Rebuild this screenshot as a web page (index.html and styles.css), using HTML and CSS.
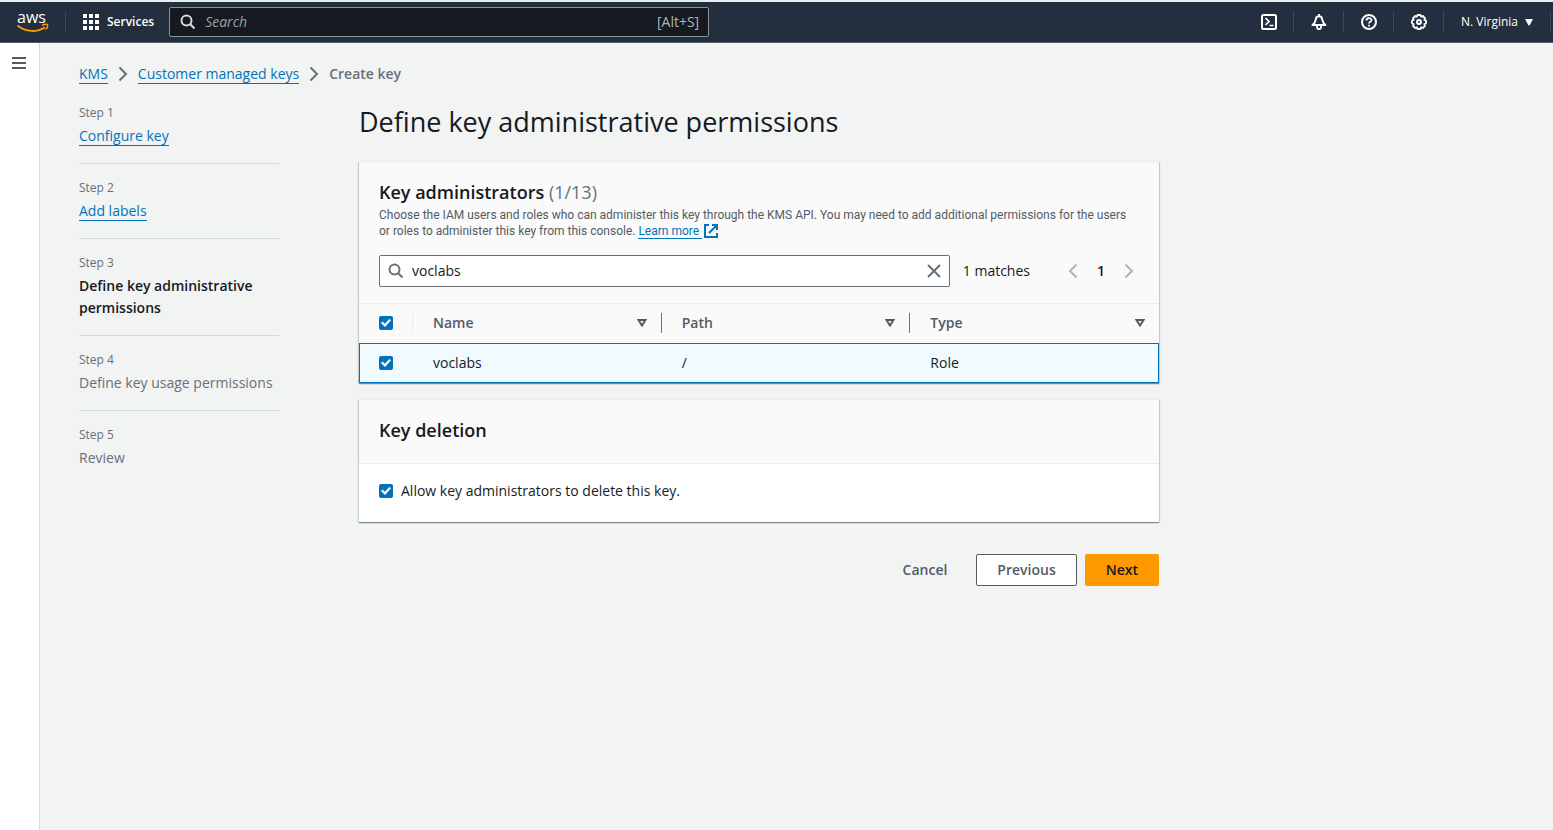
FILE: index.html
```html
<!DOCTYPE html>
<html lang="en">
<head>
<meta charset="utf-8">
<title>Define key administrative permissions</title>
<meta name="viewport" content="width=device-width, initial-scale=1">
<link rel="stylesheet" href="styles.css">
</head>
<body>
<header class="topbar">
  <a class="logo" href="#" aria-label="AWS home">
    <svg width="32" height="36" viewBox="0 -6 32 36">
      <text class="logo-text" x="0" y="13">aws</text>
      <path d="M0.500 15.500C9 22.500 20 22.500 28 17.200" fill="none" stroke="#ff9900" stroke-width="1.800"/>
      <path d="M25 15.200C27.500 14.200 30 14.200 30.500 14.800C31 15.600 30 18 28.600 19.600" fill="none" stroke="#ff9900" stroke-width="1.500"/>
    </svg>
  </a>
  <button class="services" type="button">
    <svg width="16" height="16" viewBox="0 0 16 16" fill="currentColor"><path d="M0 0h4v4H0zM6 0h4v4H6zM12 0h4v4h-4zM0 6h4v4H0zM6 6h4v4H6zM12 6h4v4h-4zM0 12h4v4H0zM6 12h4v4H6zM12 12h4v4h-4z"/></svg>
    <span>Services</span>
  </button>
  <label class="global-search">
    <svg width="16" height="16" viewBox="0 0 16 16" fill="none" stroke="currentColor" stroke-width="2"><circle cx="6.500" cy="6.500" r="5"/><path d="M10 10l4.500 4.500"/></svg>
    <input type="search" placeholder="Search" aria-label="Search">
    <span>[Alt+S]</span>
  </label>
  <nav class="tools" aria-label="Tools">
    <button type="button" aria-label="CloudShell"><svg width="16" height="16" viewBox="0 0 16 16" fill="none" stroke="currentColor" stroke-width="2"><rect x="1" y="1" width="14" height="14" rx="1.500"/><path d="M4.500 4L8 7.500l-3.500 3.500M8.500 11.500h4" stroke-width="1.700"/></svg></button>
    <button type="button" aria-label="Notifications"><svg width="16" height="16" viewBox="0 0 16 16" fill="none" stroke="currentColor" stroke-width="2"><path d="M8 0v2M1.500 11C3.500 9.500 4.500 8 4.800 5.500C5 3.400 6.200 2.200 8 2.200s3 1.200 3.200 3.300C11.500 8 12.500 9.500 14.500 11z" stroke-linejoin="round"/><path d="M6 11.500v2a1.500 1.500 0 0 0 1.500 1.500h1a1.500 1.500 0 0 0 1.500-1.500v-2" stroke-width="1.800"/></svg></button>
    <button type="button" aria-label="Help"><svg width="16" height="16" viewBox="0 0 16 16" fill="none" stroke="currentColor" stroke-width="2"><circle cx="8" cy="8" r="7"/><path d="M5.500 6.500C5.500 3.300 10.500 3.400 10.500 6.200C10.500 7.900 8 7.800 8 9.600M8 10.700v1.800" stroke-width="1.800"/></svg></button>
    <button type="button" aria-label="Settings"><svg width="16" height="16" viewBox="0 0 16 16" fill="none" stroke="currentColor" stroke-width="2"><path d="M6.500 1h3l.6 1.700 1.700-.7 2.200 2.200-.7 1.700 1.700.6v3l-1.700.6.7 1.700-2.200 2.200-1.700-.7-.6 1.700h-3l-.6-1.700-1.700.7L2 11.800l.7-1.700L1 9.500v-3l1.700-.6L2 4.200 4.200 2l1.700.7z" stroke-width="1.800" stroke-linejoin="round"/><circle cx="8" cy="8" r="2"/></svg></button>
    <button class="region" type="button"><span>N. Virginia</span><svg width="8" height="8" viewBox="0 0 8 8" fill="currentColor"><path d="M0 1h8L4.500 7.500h-1z"/></svg></button>
  </nav>
</header>
<div class="shell">
  <aside class="rail">
    <button type="button" aria-label="Open navigation"><svg width="14" height="12" viewBox="0 0 14 12" stroke="currentColor" stroke-width="2"><path d="M0 1h14M0 6h14M0 11h14"/></svg></button>
  </aside>
  <div class="page">
    <nav class="breadcrumbs" aria-label="Breadcrumbs">
      <a class="link" href="#">KMS</a>
      <svg width="10" height="16" viewBox="0 0 10 16" fill="none" stroke="currentColor" stroke-width="2"><path d="M1.500 1.500L8 8l-6.500 6.500"/></svg>
      <a class="link" href="#">Customer managed keys</a>
      <svg width="10" height="16" viewBox="0 0 10 16" fill="none" stroke="currentColor" stroke-width="2"><path d="M1.500 1.500L8 8l-6.500 6.500"/></svg>
      <span class="current">Create key</span>
    </nav>
    <div class="wizard">
      <ol class="steps">
        <li><small>Step 1</small><div><a class="link" href="#">Configure key</a></div></li>
        <li><small>Step 2</small><div><a class="link" href="#">Add labels</a></div></li>
        <li class="active" aria-current="step"><small>Step 3</small><div>Define key administrative permissions</div></li>
        <li><small>Step 4</small><div>Define key usage permissions</div></li>
        <li><small>Step 5</small><div>Review</div></li>
      </ol>
      <main class="content">
        <h1>Define key administrative permissions</h1>
        <section class="card">
          <div class="card-head">
            <h2>Key administrators <span class="count">(1/13)</span></h2>
            <p>Choose the IAM users and roles who can administer this key through the KMS API. You may need to add additional permissions for the users <br>or roles to administer this key from this console. <a class="link" href="#">Learn more&nbsp;</a><svg class="ext-icon" width="14" height="14" viewBox="0 0 14 14" fill="none" stroke="currentColor" stroke-width="2"><path d="M5 1H1v12h12V9M8 1h5v5M13 1L5 9"/></svg></p>
            <div class="filter">
              <div class="filter-box">
                <svg width="16" height="16" viewBox="0 0 16 16" fill="none" stroke="currentColor" stroke-width="2"><circle cx="6.500" cy="6.500" r="5"/><path d="M10 10l4.500 4.500"/></svg>
                <input type="text" value="voclabs" aria-label="Find key administrators">
                <button type="button" aria-label="Clear"><svg width="14" height="14" viewBox="0 0 14 14" fill="none" stroke="currentColor" stroke-width="2"><path d="M1 1l12 12M13 1L1 13"/></svg></button>
              </div>
              <span class="matches">1 matches</span>
              <div class="pager">
                <button type="button" aria-label="Previous page" disabled><svg width="10" height="16" viewBox="0 0 10 16" fill="none" stroke="currentColor" stroke-width="2"><path d="M8.500 1.500L2 8l6.500 6.500"/></svg></button>
                <button class="page-number" type="button">1</button>
                <button type="button" aria-label="Next page" disabled><svg width="10" height="16" viewBox="0 0 10 16" fill="none" stroke="currentColor" stroke-width="2"><path d="M1.500 1.500L8 8l-6.500 6.500"/></svg></button>
              </div>
            </div>
          </div>
          <table class="grid">
            <thead>
              <tr>
                <th class="pick"><div class="cell"><input type="checkbox" checked aria-label="Select all"></div></th>
                <th><div class="cell">Name<svg width="10" height="8" viewBox="0 0 10 8" fill="none" stroke="currentColor" stroke-width="2"><path d="M1.500 1h7L5 6.500z"/></svg></div></th>
                <th><div class="cell">Path<svg width="10" height="8" viewBox="0 0 10 8" fill="none" stroke="currentColor" stroke-width="2"><path d="M1.500 1h7L5 6.500z"/></svg></div></th>
                <th><div class="cell">Type<svg width="10" height="8" viewBox="0 0 10 8" fill="none" stroke="currentColor" stroke-width="2"><path d="M1.500 1h7L5 6.500z"/></svg></div></th>
              </tr>
            </thead>
            <tbody>
              <tr>
                <td class="pick"><div class="cell"><input type="checkbox" checked aria-label="Select voclabs"></div></td>
                <td><div class="cell">voclabs</div></td>
                <td><div class="cell">/</div></td>
                <td><div class="cell">Role</div></td>
              </tr>
            </tbody>
          </table>
        </section>
        <section class="card">
          <div class="card-head deletion-head"><h2>Key deletion</h2></div>
          <div class="card-body"><label class="check"><input type="checkbox" checked>Allow key administrators to delete this key.</label></div>
        </section>
        <div class="actions">
          <button class="btn btn-link" type="button">Cancel</button>
          <button class="btn btn-normal" type="button">Previous</button>
          <button class="btn btn-primary" type="button">Next</button>
        </div>
      </main>
    </div>
  </div>
</div>
</body>
</html>
```
FILE: styles.css
```css
* { box-sizing: border-box; }

body {
  margin: 0;
  min-height: 100vh;
  display: flex;
  flex-direction: column;
  background: #f2f3f3;
  color: #16191f;
  font: 14px/22px "Open Sans", "Noto Sans", sans-serif;
}

button, input { font: inherit; color: inherit; }
button { padding: 0; border: 0; background: none; cursor: pointer; }
svg { display: block; flex: none; }
h1, h2, p, ol { margin: 0; padding: 0; }

.link {
  color: #0073bb;
  text-decoration: none;
  border-bottom: 1px solid #0073bb;
}

/* Top bar */
.topbar {
  display: flex;
  align-items: center;
  height: 43px;
  border-top: 2px solid #eaeded;
  border-bottom: 1px solid #545b64;
  background: #232f3e;
  color: #fff;
  font-size: 12px;
}
.logo {
  display: flex;
  align-items: center;
  height: 22px;
  padding: 0 16px 0 17px;
  border-right: 1px solid #3c4753;
}
.logo-text { font: 500 16px "Open Sans", sans-serif; fill: #fff; }
.services {
  display: flex;
  align-items: center;
  gap: 8px;
  padding: 0 15px 0 17px;
  font-weight: 600;
}
.global-search {
  display: flex;
  align-items: center;
  gap: 9px;
  width: 540px;
  height: 30px;
  padding: 0 9px 0 10px;
  border: 1px solid #879596;
  border-radius: 2px;
  background: #16191f;
  color: #d5dbdb;
  font-size: 14px;
}
.global-search input {
  flex: 1;
  min-width: 0;
  padding: 0;
  border: 0;
  outline: 0;
  background: transparent;
}
.global-search input::placeholder { color: #95a5a6; font-style: italic; opacity: 1; }
.global-search span { color: #aab7b8; }
.tools { display: flex; align-items: center; margin-left: auto; padding-right: 2px; }
.tools button {
  display: flex;
  align-items: center;
  justify-content: center;
  gap: 7px;
  width: 50px;
  height: 22px;
  border-right: 1px solid #3c4753;
}
.tools .region { width: 107px; font-weight: 500; }

/* Page frame */
.shell { display: flex; flex: 1; }
.rail {
  width: 40px;
  padding: 14px 12px;
  border-right: 1px solid #d5dbdb;
  background: #fff;
  color: #545b64;
}
.rail button { display: block; }
.page { flex: 1; min-width: 0; padding: 20px 40px 40px 39px; }
.breadcrumbs { display: flex; align-items: center; gap: 10px; color: #687078; }
.breadcrumbs .link { line-height: 18px; }
.current { font-weight: 600; }
.wizard {
  display: grid;
  grid-template-columns: 200px minmax(0, 800px);
  gap: 80px;
}

/* Step list */
.steps { padding-top: 20px; list-style: none; color: #687078; }
.steps li { padding-bottom: 16px; }
.steps li + li { padding-top: 16px; border-top: 1px solid #d5dbdb; }
.steps small { display: block; margin-bottom: 4px; font-size: 12px; line-height: 16px; }
.steps .link { display: inline-block; line-height: 18px; }
.steps .active div { color: #16191f; font-weight: 600; }

/* Content */
.content { padding-top: 19px; }
h1 { font-size: 27px; font-weight: 400; line-height: 36px; }
h2 { font-size: 18px; font-weight: 600; line-height: 22px; }
.count { color: #687078; font-weight: 400; }
.card {
  background: #fff;
  border-top: 1px solid #eaeded;
  box-shadow: 0 1px 1px 0 rgba(0, 28, 36, .3), 1px 1px 1px 0 rgba(0, 28, 36, .15), -1px 1px 1px 0 rgba(0, 28, 36, .15);
}
h1 + .card { margin-top: 21px; }
.card + .card { margin-top: 16px; }
.card-head { padding: 19px 20px 16px; background: #fafafa; border-bottom: 1px solid #eaeded; }
.card-head p { margin-top: 4px; color: #545b64; font-family: Roboto, "Open Sans", sans-serif; font-size: 12px; line-height: 16px; }
.ext-icon { display: inline-block; margin-left: 2px; vertical-align: text-bottom; color: #0073bb; }
.filter { display: flex; align-items: center; margin-top: 16px; }
.filter-box {
  display: flex;
  align-items: center;
  gap: 8px;
  flex: 1;
  height: 32px;
  padding: 0 8px;
  border: 1px solid #687078;
  border-radius: 2px;
  background: #fff;
  color: #687078;
}
.filter-box input { flex: 1; min-width: 0; padding: 0; border: 0; outline: 0; background: none; color: #16191f; }
.matches { padding-left: 13px; }
.pager { display: flex; align-items: center; gap: 19px; margin-left: 38px; padding-right: 5px; }
.pager button:disabled { color: #aab7b8; }
.page-number { font-weight: 600; }

.grid { width: 100%; border-collapse: collapse; table-layout: fixed; text-align: left; }
.grid th, .grid td { padding: 0; }
.grid .pick { width: 54px; }
.cell { display: flex; align-items: center; justify-content: space-between; height: 20px; padding: 0 14px 0 20px; }
thead tr { background: #fafafa; color: #545b64; }
.grid th { padding: 9px 0 10px; font-weight: 600; }
thead th:not(:last-child) .cell { border-right: 1px solid #687078; }
thead th.pick .cell { border-right-color: #eaeded; }
tbody tr { height: 40px; background: #f1faff; outline: 1px solid #0073bb; outline-offset: -1px; }

input[type="checkbox"] {
  appearance: none;
  flex: none;
  width: 14px;
  height: 14px;
  margin: 0;
  border-radius: 2px;
  background: #0073bb;
  display: grid;
  place-items: center;
}
input[type="checkbox"]:checked::before {
  content: "";
  width: 10px;
  height: 8px;
  background: #fff;
  clip-path: polygon(0 50%, 16% 32%, 38% 58%, 84% 0, 100% 16%, 40% 100%);
}
.deletion-head { padding-bottom: 22px; }
.card-body { padding: 16px 20px 20px; }
.check { display: flex; align-items: center; gap: 8px; }

.actions { display: flex; justify-content: flex-end; gap: 8px; margin-top: 32px; }
.btn { height: 32px; padding: 0 20px; border: 1px solid transparent; border-radius: 2px; font-weight: 600; color: #545b64; }
.btn-normal { border-color: #545b64; background: #fff; }
.btn-primary { background: #ff9900; color: #16191f; }
```
